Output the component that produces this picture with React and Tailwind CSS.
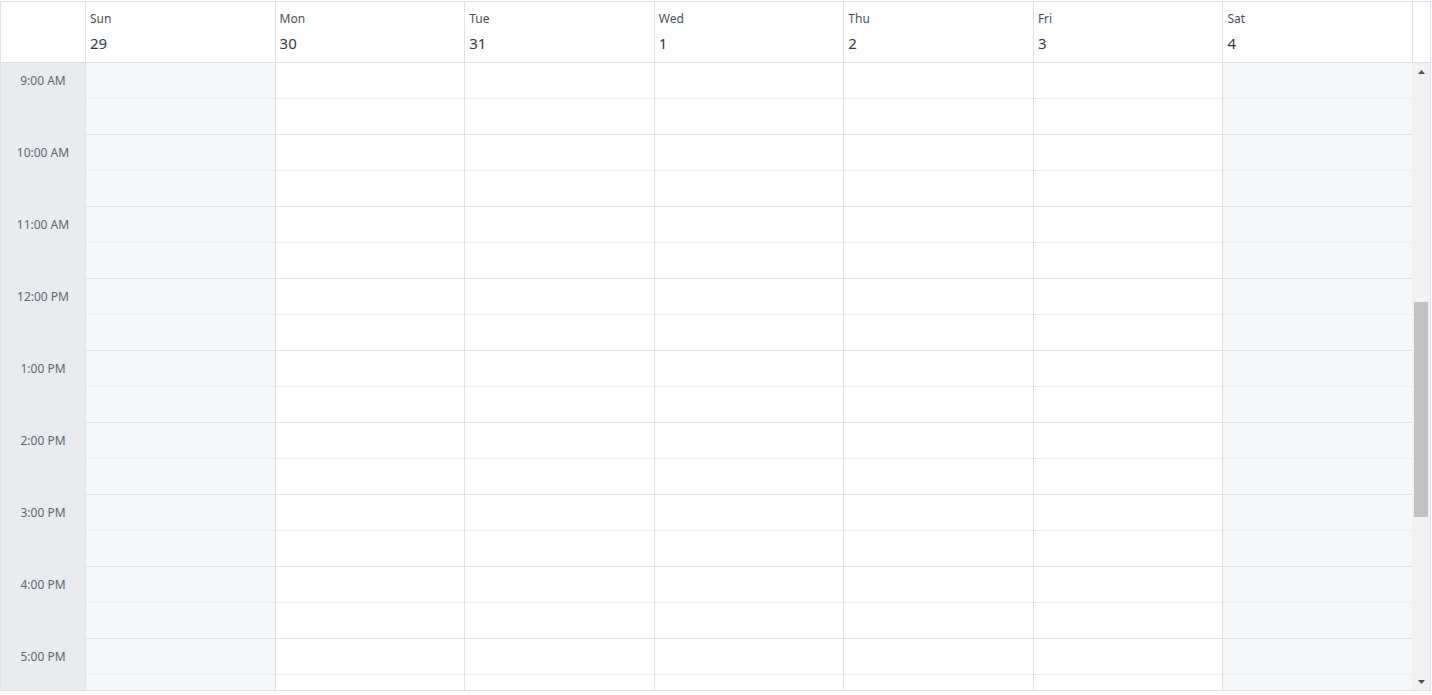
import React from "react";

const days = [
  { name: "Sun", date: "29", weekend: true },
  { name: "Mon", date: "30" },
  { name: "Tue", date: "31" },
  { name: "Wed", date: "1" },
  { name: "Thu", date: "2" },
  { name: "Fri", date: "3" },
  { name: "Sat", date: "4", weekend: true },
];

const hours = ["9:00 AM", "10:00 AM", "11:00 AM", "12:00 PM", "1:00 PM", "2:00 PM", "3:00 PM", "4:00 PM", "5:00 PM"];

function HourSlot({ weekend }) {
  return (
    <div className={`shrink-0 ${weekend ? "bg-[#f6f7f9]" : "bg-white"}`}>
      <div className="h-[36px] border-b border-dotted border-[#dee2e6]" />
      <div className="h-[36px] border-b border-[#dee2e6]" />
    </div>
  );
}

export default function App() {
  return (
    <div className="pt-px bg-white" style={{ fontFamily: '"Noto Sans", "Open Sans", sans-serif' }}>
      <div className="w-[1431px] h-[690px] border border-[#dee2e6] flex flex-col overflow-hidden bg-white">
        {/* header row */}
        <div className="flex h-[61px] shrink-0 border-b border-[#dee2e6]">
          <div className="w-[85px] shrink-0 border-r border-[#dee2e6]" />
          {days.map((d, i) => (
            <div
              key={d.name}
              className={`flex-1 min-w-0 pl-[4px] pt-[9px] ${i < 6 ? "border-r border-[#dee2e6]" : ""}`}
            >
              <div className="text-[12px] leading-[16px] text-[#495057]">{d.name}</div>
              <div className="text-[15px] leading-[20px] mt-[6px] text-[#343a40]">{d.date}</div>
            </div>
          ))}
          <div className="w-[18px] shrink-0 border-l border-[#dee2e6]" />
        </div>

        {/* body */}
        <div className="flex flex-1 min-h-0 overflow-hidden">
          <div className="w-[85px] shrink-0 border-r border-[#dee2e6] bg-[#e9ecef] flex flex-col">
            {hours.map((h) => (
              <div key={h} className="shrink-0 h-[72px]">
                <div className="h-[36px] flex items-center justify-center text-[12px] text-[#5f6670]">{h}</div>
              </div>
            ))}
          </div>
          {days.map((d, i) => (
            <div
              key={d.name}
              className={`flex-1 min-w-0 flex flex-col ${i < 6 ? "border-r border-[#dee2e6]" : ""} ${d.weekend ? "bg-[#f6f7f9]" : "bg-white"}`}
            >
              {hours.map((h) => (
                <HourSlot key={h} weekend={d.weekend} />
              ))}
            </div>
          ))}

          {/* scrollbar */}
          <div className="w-[18px] shrink-0 bg-[#f1f1f1] flex flex-col">
            <div className="h-[17px] shrink-0 flex items-center justify-center">
              <svg width="9" height="6" viewBox="0 0 9 6"><path d="M4.5 1 L8 5 L1 5 Z" fill="#505050" /></svg>
            </div>
            <div className="flex-1 min-h-0 pt-[222px] px-[2px]">
              <div className="h-[215px] bg-[#c1c1c1]" />
            </div>
            <div className="h-[17px] shrink-0 flex items-center justify-center">
              <svg width="9" height="6" viewBox="0 0 9 6"><path d="M1 1 L8 1 L4.5 5 Z" fill="#505050" /></svg>
            </div>
          </div>
        </div>
      </div>
    </div>
  );
}
